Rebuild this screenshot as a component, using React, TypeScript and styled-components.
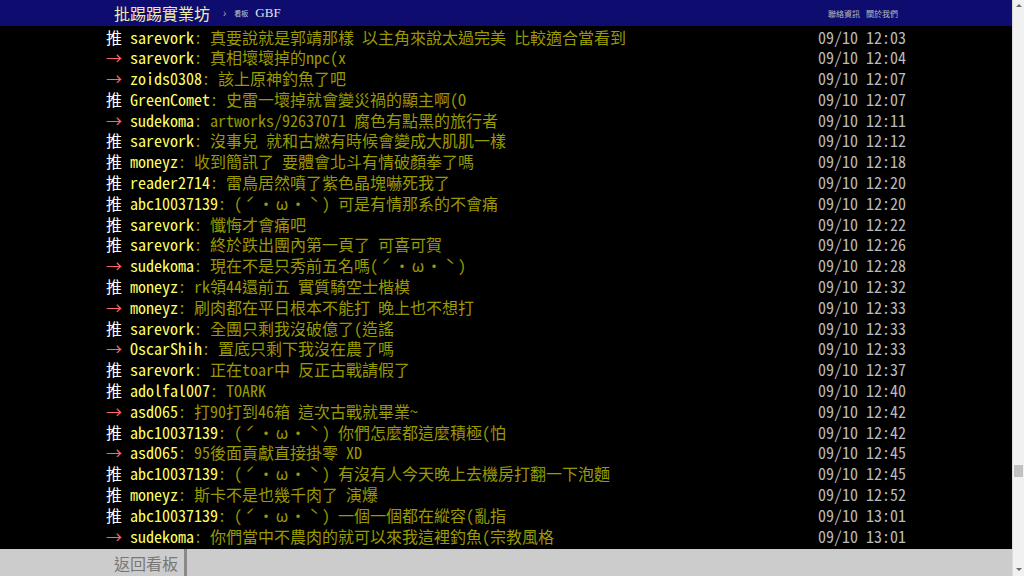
import React from "react";
import styled, { createGlobalStyle } from "styled-components";

const GlobalStyle = createGlobalStyle`
  html, body {
    margin: 0;
    padding: 0;
    background: #000;
    overflow: hidden;
  }
`;

const MONO = `"Noto Sans Mono CJK TC", "Noto Sans Mono CJK SC", "Noto Sans CJK TC", monospace`;

const Page = styled.div`
  display: flex;
  width: 1024px;
  height: 576px;
`;

const Screen = styled.div`
  flex: 1;
  display: flex;
  flex-direction: column;
  min-width: 0;
  background: #000;
`;

const Topbar = styled.div`
  height: 26px;
  flex-shrink: 0;
  background: #0f0c70;
  display: flex;
  justify-content: center;
`;

const Bar = styled.div`
  width: 800px;
  display: flex;
  align-items: center;
  padding: 0 8px;
  box-sizing: border-box;
`;

const Logo = styled.span`
  font-family: "Noto Sans CJK TC", sans-serif;
  font-size: 16px;
  color: #eeeea0;
`;

const Crumb = styled.span`
  font-family: "Liberation Sans", sans-serif;
  font-size: 10px;
  color: #aaa;
  margin: 0 8px 0 13px;
`;

const BoardLabel = styled.span`
  font-family: "Noto Sans CJK TC", sans-serif;
  font-size: 7px;
  color: #ccc;
  margin-right: 7px;
`;

const BoardName = styled.span`
  font-family: "Liberation Serif", serif;
  font-size: 13px;
  color: #e4e4ee;
`;

const Links = styled.div`
  margin-left: auto;
  display: flex;
  gap: 6px;
  font-family: "Noto Sans CJK TC", sans-serif;
  font-size: 8px;
  color: #bbb;
`;

const Feed = styled.div`
  flex: 1;
  display: flex;
  justify-content: center;
  overflow: hidden;
  padding-top: 0.5px;
`;

const Column = styled.div`
  width: 800px;
  font-family: ${MONO};
  font-size: 16px;
`;

const Row = styled.div`
  display: flex;
  height: 20.8px;
  line-height: 20.8px;
  white-space: pre;
`;

const Tag = styled.span<{ $arrow?: boolean }>`
  color: ${(p) => (p.$arrow ? "#f66" : "#fff")};
`;

const User = styled.span`
  color: #ff6;
`;

const Content = styled.span`
  color: #990;
`;

const Wide = styled.span`
  display: inline-block;
  width: 16px;
  text-align: center;
`;

const Stamp = styled.span`
  margin-left: auto;
  color: #bbb;
`;

const Footer = styled.div`
  height: 27px;
  flex-shrink: 0;
  background: #ccc;
  display: flex;
  justify-content: center;
`;

const FooterBar = styled.div`
  width: 800px;
  display: flex;
`;

const BackButton = styled.div`
  display: flex;
  align-items: center;
  padding: 0 6px 0 8px;
  border-right: 3px solid #8a8a8a;
  font-family: "Noto Sans CJK TC", sans-serif;
  font-size: 16px;
  color: #777;
`;

const Scrollbar = styled.div`
  width: 11px;
  border-left: 1px solid #dcdcdc;
  background: #f1f1f1;
  display: flex;
  flex-direction: column;
  align-items: center;
`;

const Arrow = styled.div<{ $down?: boolean }>`
  width: 0;
  height: 0;
  margin: ${(p) => (p.$down ? "auto 0 5px" : "4px 0 0")};
  border-left: 3px solid transparent;
  border-right: 3px solid transparent;
  ${(p) =>
    p.$down ? "border-top: 3px solid #6a6a6a;" : "border-bottom: 3px solid #6a6a6a;"}
`;

const Thumb = styled.div<{ $top: number }>`
  width: 9px;
  height: 12px;
  margin-top: ${(p) => p.$top}px;
  background: #c1c1c1;
`;

type Push = [boolean, string, string, string];

const pushes: Push[] = [
  [false, "sarevork", "真要說就是郭靖那樣 以主角來說太過完美 比較適合當看到", "12:03"],
  [true, "sarevork", "真相壞壞掉的npc(x", "12:04"],
  [true, "zoids0308", "該上原神釣魚了吧", "12:07"],
  [false, "GreenComet", "史雷一壞掉就會變災禍的顯主啊(O", "12:07"],
  [true, "sudekoma", "artworks/92637071 腐色有點黑的旅行者", "12:11"],
  [false, "sarevork", "沒事兒 就和古燃有時候會變成大肌肌一樣", "12:12"],
  [false, "moneyz", "收到簡訊了 要體會北斗有情破顏拳了嗎", "12:18"],
  [false, "reader2714", "雷鳥居然噴了紫色晶塊嚇死我了", "12:20"],
  [false, "abc10037139", "(ˊ・ω・ˋ) 可是有情那系的不會痛", "12:20"],
  [false, "sarevork", "懺悔才會痛吧", "12:22"],
  [false, "sarevork", "終於跌出團內第一頁了 可喜可賀", "12:26"],
  [true, "sudekoma", "現在不是只秀前五名嗎(ˊ・ω・ˋ)", "12:28"],
  [false, "moneyz", "rk領44還前五 實質騎空士楷模", "12:32"],
  [true, "moneyz", "刷肉都在平日根本不能打 晚上也不想打", "12:33"],
  [false, "sarevork", "全團只剩我沒破億了(造謠", "12:33"],
  [true, "OscarShih", "置底只剩下我沒在農了嗎", "12:33"],
  [false, "sarevork", "正在toar中 反正古戰請假了", "12:37"],
  [false, "adolfal007", "TOARK", "12:40"],
  [true, "asd065", "打90打到46箱 這次古戰就畢業~", "12:42"],
  [false, "abc10037139", "(ˊ・ω・ˋ) 你們怎麼都這麼積極(怕", "12:42"],
  [true, "asd065", "95後面貢獻直接掛零 XD", "12:45"],
  [false, "abc10037139", "(ˊ・ω・ˋ) 有沒有人今天晚上去機房打翻一下泡麵", "12:45"],
  [false, "moneyz", "斯卡不是也幾千肉了 演爆", "12:52"],
  [false, "abc10037139", "(ˊ・ω・ˋ) 一個一個都在縱容(亂指", "13:01"],
  [true, "sudekoma", "你們當中不農肉的就可以來我這裡釣魚(宗教風格", "13:01"],
];

// the old terminal font draws these kaomoji glyphs full width
const WIDE = "ˊωˋ";

function renderText(text: string) {
  const out: React.ReactNode[] = [];
  let buf = "";
  Array.from(text).forEach((ch, i) => {
    if (WIDE.includes(ch)) {
      if (buf) out.push(buf);
      buf = "";
      out.push(<Wide key={i}>{ch}</Wide>);
    } else {
      buf += ch;
    }
  });
  if (buf) out.push(buf);
  return out;
}

export default function App() {
  return (
    <Page>
      <GlobalStyle />
      <Screen>
        <Topbar>
          <Bar>
            <Logo>批踢踢實業坊</Logo>
            <Crumb>›</Crumb>
            <BoardLabel>看板</BoardLabel>
            <BoardName>GBF</BoardName>
            <Links>
              <span>聯絡資訊</span>
              <span>關於我們</span>
            </Links>
          </Bar>
        </Topbar>
        <Feed>
          <Column>
            {pushes.map(([arrow, user, text, time], i) => (
              <Row key={i}>
                <Tag $arrow={arrow}>{arrow ? "→ " : "推 "}</Tag>
                <User>{user}</User>
                <Content>: {renderText(text)}</Content>
                <Stamp>09/10 {time}</Stamp>
              </Row>
            ))}
          </Column>
        </Feed>
        <Footer>
          <FooterBar>
            <BackButton>返回看板</BackButton>
          </FooterBar>
        </Footer>
      </Screen>
      <Scrollbar>
        <Arrow />
        <Thumb $top={458} />
        <Arrow $down />
      </Scrollbar>
    </Page>
  );
}
